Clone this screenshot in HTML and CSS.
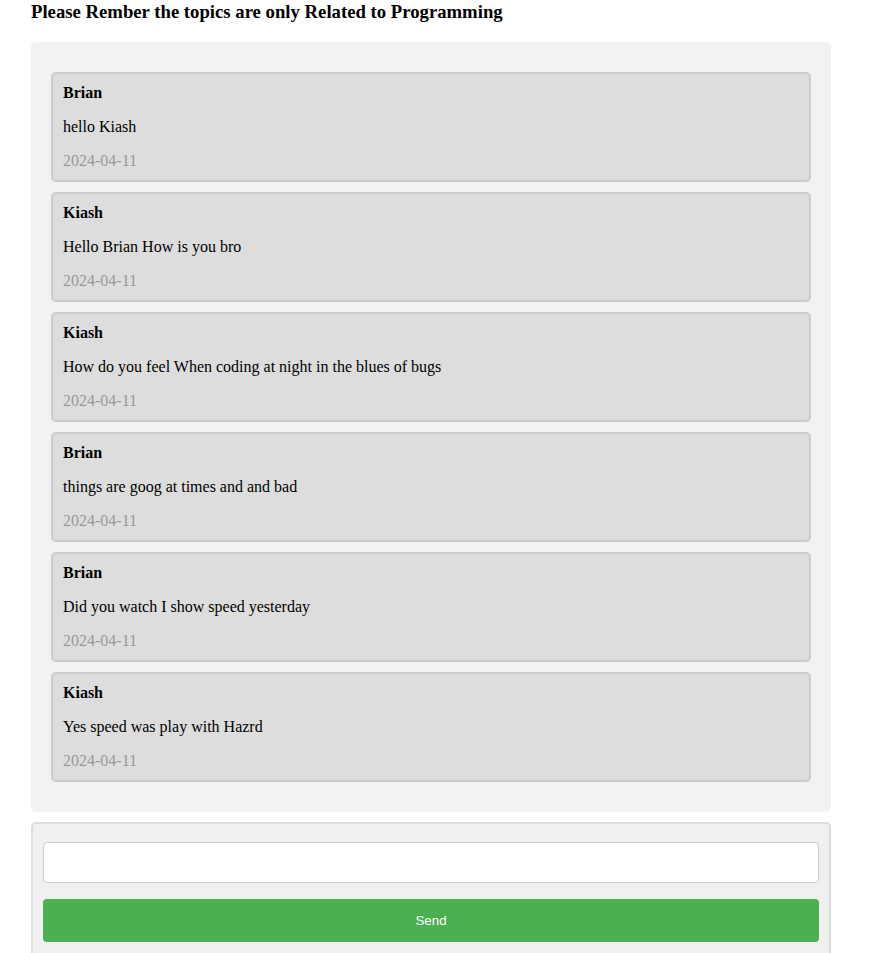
FILE: index.html
```html
<!DOCTYPE html>
<html>
<head>
<meta charset="utf-8">
<link rel="stylesheet" href="styles.css">
</head>
<body>
<div class="page">
  <h3 class="title">Please Rember the topics are only Related to Programming</h3>
  <div class="chat">
    <div class="msg"><strong class="name">Brian</strong><p class="text">hello Kiash</p><div class="date">2024-04-11</div></div>
    <div class="msg"><strong class="name">Kiash</strong><p class="text">Hello Brian How is you bro</p><div class="date">2024-04-11</div></div>
    <div class="msg"><strong class="name">Kiash</strong><p class="text">How do you feel When coding at night in the blues of bugs</p><div class="date">2024-04-11</div></div>
    <div class="msg"><strong class="name">Brian</strong><p class="text">things are goog at times and and bad</p><div class="date">2024-04-11</div></div>
    <div class="msg"><strong class="name">Brian</strong><p class="text">Did you watch I show speed yesterday</p><div class="date">2024-04-11</div></div>
    <div class="msg"><strong class="name">Kiash</strong><p class="text">Yes speed was play with Hazrd</p><div class="date">2024-04-11</div></div>
  </div>
  <form class="composer">
    <input class="field" type="text">
    <button class="send" type="button">Send</button>
  </form>
</div>
</body>
</html>
```
FILE: styles.css
```css
html, body {
  margin: 0;
  padding: 0;
  background: #fff;
}
body {
  font-family: "Liberation Serif", "Times New Roman", serif;
  font-size: 16px;
  color: #000;
}
.page {
  width: 800px;
  padding-left: 31px;
}
.title {
  font-size: 18.72px;
  font-weight: bold;
  margin: 0 0 19px;
  padding-top: 1px;
  line-height: 22px;
}
.chat {
  background: #f2f2f2;
  border-radius: 5px;
  padding: 20px;
}
.msg {
  background: #ddd;
  border: 2px solid #ccc;
  border-radius: 5px;
  padding: 10px;
  margin: 10px 0;
  line-height: 18px;
}
.name {
  display: block;
  font-weight: bold;
}
.text {
  margin: 16px 0;
}
.date {
  color: #999;
}
.composer {
  margin-top: 10px;
  background: #f0f0f0;
  border: 2px solid #ddd;
  border-radius: 5px;
  padding: 10px;
  box-sizing: border-box;
}
.field {
  display: block;
  box-sizing: border-box;
  width: 100%;
  height: 41px;
  margin: 8px 0;
  padding: 10px;
  border: 1px solid #ccc;
  border-radius: 4px;
  background: #fff;
  font-size: 16px;
}
.send {
  display: block;
  box-sizing: border-box;
  width: 100%;
  height: 43px;
  margin: 16px 0 8px;
  border: none;
  border-radius: 4px;
  background: #4caf50;
  color: #fff;
  font-family: "Liberation Sans", Arial, sans-serif;
  font-size: 13.33px;
}
```
